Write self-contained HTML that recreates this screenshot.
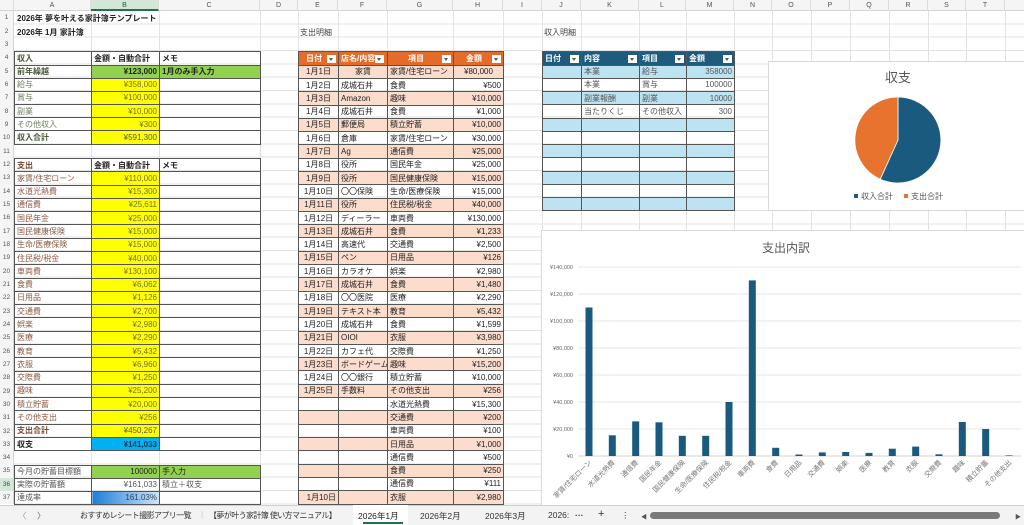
<!DOCTYPE html>
<html><head><meta charset="utf-8">
<style>
*{box-sizing:border-box;margin:0;padding:0}
body{width:1024px;height:525px;overflow:hidden;background:#fff;position:relative;font-family:"Liberation Sans","Noto Sans CJK JP",sans-serif;font-size:8px;color:#222}
.abs{position:absolute}
#grid{position:absolute;left:14px;top:11.33px;width:1010px;height:494px;background:repeating-linear-gradient(to bottom,transparent 0,transparent 12.333px,#e2e2e2 12.333px,#e2e2e2 13.333px)}
.vl{position:absolute;top:0;width:1px;height:505px;background:#e2e2e2}
#colh{position:absolute;left:0;top:0;width:1024px;height:11px;background:#f5f5f5;border-bottom:1px solid #d4d4d4}
#colh div{position:absolute;top:0;height:11px;line-height:11px;text-align:center;font-size:7px;color:#555;border-right:1px solid #dcdcdc}
#rowh{position:absolute;left:0;top:11.33px;width:14px;background:#f5f5f5;border-right:1px solid #d4d4d4}
#rowh div{height:13.333px;line-height:13px;text-align:center;font-size:6.5px;color:#555}
table{position:absolute;border-collapse:collapse;table-layout:fixed}
td{border:1px solid #555;padding:0 2px;white-space:nowrap;overflow:hidden;font-size:8px;line-height:11px;height:12px}
.r{text-align:right}.c{text-align:center}.b{font-weight:bold}
.y{background:#ffff00;color:#6f6f3a}
.g{background:#92d050}
.inc{color:#6f8060}.exp{color:#8a5a45}
.oh td{background:#e36c2a;color:#fff;font-weight:bold;text-align:center}
.ep tr:nth-child(even) td{background:#fbdccd}
.ip tr:nth-child(even) td{background:#bde2f1}
.ih td{background:#1f5b7d!important;color:#fff;font-weight:bold}
.dd{display:inline-block;width:9px;height:8px;background:#fff;float:right;margin-top:2px;position:relative}
.dd:after{content:"";position:absolute;left:2px;top:3px;border-left:2.5px solid transparent;border-right:2.5px solid transparent;border-top:3px solid #555}
#tabs{position:absolute;left:0;top:505px;width:1024px;height:20px;background:#f3f3f3;border-top:1px solid #d0d0d0;font-size:8.5px;color:#333}
#tabs span{position:absolute;top:4px;white-space:nowrap}
.t{font-size:8px;letter-spacing:-0.6px}
</style></head><body>
<div id="grid"></div>
<div class="vl" style="left:91px"></div><div class="vl" style="left:159px"></div><div class="vl" style="left:260px"></div><div class="vl" style="left:298px"></div><div class="vl" style="left:338px"></div><div class="vl" style="left:387px"></div><div class="vl" style="left:453px"></div><div class="vl" style="left:503px"></div><div class="vl" style="left:542px"></div><div class="vl" style="left:581px"></div><div class="vl" style="left:639px"></div><div class="vl" style="left:686px"></div><div class="vl" style="left:734px"></div><div class="vl" style="left:772px"></div><div class="vl" style="left:811px"></div><div class="vl" style="left:850px"></div><div class="vl" style="left:889px"></div><div class="vl" style="left:928px"></div><div class="vl" style="left:966px"></div><div class="vl" style="left:1005px"></div>

<div id="colh">
<div style="left:0;width:14px"></div>
<div style="left:14px;width:77px">A</div><div style="left:91px;width:68px;background:#d3e6d8;border-bottom:2px solid #217346;color:#1d5c37">B</div><div style="left:159px;width:101px">C</div><div style="left:260px;width:38px">D</div><div style="left:298px;width:40px">E</div><div style="left:338px;width:49px">F</div><div style="left:387px;width:66px">G</div><div style="left:453px;width:50px">H</div><div style="left:503px;width:39px">I</div><div style="left:542px;width:39px">J</div><div style="left:581px;width:58px">K</div><div style="left:639px;width:47px">L</div><div style="left:686px;width:48px">M</div><div style="left:734px;width:38px">N</div><div style="left:772px;width:39px">O</div><div style="left:811px;width:39px">P</div><div style="left:850px;width:39px">Q</div><div style="left:889px;width:39px">R</div><div style="left:928px;width:38px">S</div><div style="left:966px;width:39px">T</div>
</div>
<div id="rowh">
<div>1</div><div>2</div><div>3</div><div>4</div><div>5</div><div>6</div><div>7</div><div>8</div><div>9</div><div>10</div><div>11</div><div>12</div><div>13</div><div>14</div><div>15</div><div>16</div><div>17</div><div>18</div><div>19</div><div>20</div><div>21</div><div>22</div><div>23</div><div>24</div><div>25</div><div>26</div><div>27</div><div>28</div><div>29</div><div>30</div><div>31</div><div>32</div><div>33</div><div>34</div><div>35</div><div style="background:#d3e6d8;color:#1d5c37">36</div><div>37</div>
</div>

<div class="abs b" style="left:17px;top:12px;font-size:8px;line-height:13px">2026年 夢を叶える家計簿テンプレート</div>
<div class="abs b" style="left:17px;top:25.5px;font-size:8px;line-height:13px">2026年 1月 家計簿</div>
<div class="abs" style="left:300px;top:25.5px;line-height:13px;color:#444">支出明細</div>
<div class="abs" style="left:544px;top:25.5px;line-height:13px;color:#444">収入明細</div>

<table style="left:14px;top:51.33px;width:246px;height:93.33px">
<col style="width:77px"><col style="width:68px"><col style="width:101px">
<tr><td class="b inc" style="color:#4a5a3a">収入</td><td class="b">金額・自動合計</td><td class="b">メモ</td></tr>
<tr><td class="b" style="color:#4a5a3a">前年繰越</td><td class="g r b">¥123,000</td><td class="g b">1月のみ手入力</td></tr>
<tr><td class="inc">給与</td><td class="y r">¥358,000</td><td></td></tr>
<tr><td class="inc">賞与</td><td class="y r">¥100,000</td><td></td></tr>
<tr><td class="inc">副業</td><td class="y r">¥10,000</td><td></td></tr>
<tr><td class="inc">その他収入</td><td class="y r">¥300</td><td></td></tr>
<tr><td class="b" style="color:#4a5a3a">収入合計</td><td class="y r" style="color:#555">¥591,300</td><td></td></tr>
</table>

<table style="left:14px;top:158px;width:246px;height:293.33px">
<col style="width:77px"><col style="width:68px"><col style="width:101px">
<tr><td class="b" style="color:#7a4a35">支出</td><td class="b">金額・自動合計</td><td class="b">メモ</td></tr>
<tr><td class="exp">家賃/住宅ローン</td><td class="y r">¥110,000</td><td></td></tr>
<tr><td class="exp">水道光熱費</td><td class="y r">¥15,300</td><td></td></tr>
<tr><td class="exp">通信費</td><td class="y r">¥25,611</td><td></td></tr>
<tr><td class="exp">国民年金</td><td class="y r">¥25,000</td><td></td></tr>
<tr><td class="exp">国民健康保険</td><td class="y r">¥15,000</td><td></td></tr>
<tr><td class="exp">生命/医療保険</td><td class="y r">¥15,000</td><td></td></tr>
<tr><td class="exp">住民税/税金</td><td class="y r">¥40,000</td><td></td></tr>
<tr><td class="exp">車両費</td><td class="y r">¥130,100</td><td></td></tr>
<tr><td class="exp">食費</td><td class="y r">¥6,062</td><td></td></tr>
<tr><td class="exp">日用品</td><td class="y r">¥1,126</td><td></td></tr>
<tr><td class="exp">交通費</td><td class="y r">¥2,700</td><td></td></tr>
<tr><td class="exp">娯楽</td><td class="y r">¥2,980</td><td></td></tr>
<tr><td class="exp">医療</td><td class="y r">¥2,290</td><td></td></tr>
<tr><td class="exp">教育</td><td class="y r">¥5,432</td><td></td></tr>
<tr><td class="exp">衣服</td><td class="y r">¥6,960</td><td></td></tr>
<tr><td class="exp">交際費</td><td class="y r">¥1,250</td><td></td></tr>
<tr><td class="exp">趣味</td><td class="y r">¥25,200</td><td></td></tr>
<tr><td class="exp">積立貯蓄</td><td class="y r">¥20,000</td><td></td></tr>
<tr><td class="exp">その他支出</td><td class="y r">¥256</td><td></td></tr>
<tr><td class="b" style="color:#7a4a35">支出合計</td><td class="y r" style="color:#555">¥450,267</td><td></td></tr>
<tr><td class="b">収支</td><td class="r b" style="background:#00b0f0;color:#1a3a5a">¥141,033</td><td></td></tr>
</table>

<table style="left:14px;top:464.67px;width:246px;height:40px">
<col style="width:77px"><col style="width:68px"><col style="width:101px">
<tr><td style="color:#555">今月の貯蓄目標額</td><td class="g r">100000</td><td class="g">手入力</td></tr>
<tr><td style="color:#555">実際の貯蓄額</td><td class="r" style="border:1.5px solid #217346;color:#555">¥161,033</td><td style="color:#555">積立＋収支</td></tr>
<tr><td style="color:#555">達成率</td><td class="r" style="background:linear-gradient(to right,#1e7fd8,#cfe6fb);color:#345">161.03%</td><td></td></tr>
</table>

<table class="ep" style="left:298px;top:51.33px;width:205px;height:453.33px">
<col style="width:40px"><col style="width:49px"><col style="width:66px"><col style="width:50px">
<tr class="oh"><td>日付<span class="dd"></span></td><td style="text-align:left">店名/内容<span class="dd" style="position:absolute"></span></td><td>項目<span class="dd"></span></td><td>金額<span class="dd"></span></td></tr>
<tr><td class="c">1月1日</td><td class="c">家賃</td><td>家賃/住宅ローン</td><td class="c">¥80,000</td></tr>
<tr><td class="c">1月2日</td><td>成城石井</td><td>食費</td><td class="r">¥500</td></tr>
<tr><td class="c">1月3日</td><td>Amazon</td><td>趣味</td><td class="r">¥10,000</td></tr>
<tr><td class="c">1月4日</td><td>成城石井</td><td>食費</td><td class="r">¥1,000</td></tr>
<tr><td class="c">1月5日</td><td>郵便局</td><td>積立貯蓄</td><td class="r">¥10,000</td></tr>
<tr><td class="c">1月6日</td><td>倉庫</td><td>家賃/住宅ローン</td><td class="r">¥30,000</td></tr>
<tr><td class="c">1月7日</td><td>Ag</td><td>通信費</td><td class="r">¥25,000</td></tr>
<tr><td class="c">1月8日</td><td>役所</td><td>国民年金</td><td class="r">¥25,000</td></tr>
<tr><td class="c">1月9日</td><td>役所</td><td>国民健康保険</td><td class="r">¥15,000</td></tr>
<tr><td class="c">1月10日</td><td>〇〇保険</td><td>生命/医療保険</td><td class="r">¥15,000</td></tr>
<tr><td class="c">1月11日</td><td>役所</td><td>住民税/税金</td><td class="r">¥40,000</td></tr>
<tr><td class="c">1月12日</td><td>ディーラー</td><td>車両費</td><td class="r">¥130,000</td></tr>
<tr><td class="c">1月13日</td><td>成城石井</td><td>食費</td><td class="r">¥1,233</td></tr>
<tr><td class="c">1月14日</td><td>高速代</td><td>交通費</td><td class="r">¥2,500</td></tr>
<tr><td class="c">1月15日</td><td>ペン</td><td>日用品</td><td class="r">¥126</td></tr>
<tr><td class="c">1月16日</td><td>カラオケ</td><td>娯楽</td><td class="r">¥2,980</td></tr>
<tr><td class="c">1月17日</td><td>成城石井</td><td>食費</td><td class="r">¥1,480</td></tr>
<tr><td class="c">1月18日</td><td>〇〇医院</td><td>医療</td><td class="r">¥2,290</td></tr>
<tr><td class="c">1月19日</td><td>テキスト本</td><td>教育</td><td class="r">¥5,432</td></tr>
<tr><td class="c">1月20日</td><td>成城石井</td><td>食費</td><td class="r">¥1,599</td></tr>
<tr><td class="c">1月21日</td><td>OIOI</td><td>衣服</td><td class="r">¥3,980</td></tr>
<tr><td class="c">1月22日</td><td>カフェ代</td><td>交際費</td><td class="r">¥1,250</td></tr>
<tr><td class="c">1月23日</td><td>ボードゲーム</td><td>趣味</td><td class="r">¥15,200</td></tr>
<tr><td class="c">1月24日</td><td>〇〇銀行</td><td>積立貯蓄</td><td class="r">¥10,000</td></tr>
<tr><td class="c">1月25日</td><td>手数料</td><td>その他支出</td><td class="r">¥256</td></tr>
<tr><td></td><td></td><td>水道光熱費</td><td class="r">¥15,300</td></tr>
<tr><td></td><td></td><td>交通費</td><td class="r">¥200</td></tr>
<tr><td></td><td></td><td>車両費</td><td class="r">¥100</td></tr>
<tr><td></td><td></td><td>日用品</td><td class="r">¥1,000</td></tr>
<tr><td></td><td></td><td>通信費</td><td class="r">¥500</td></tr>
<tr><td></td><td></td><td>食費</td><td class="r">¥250</td></tr>
<tr><td></td><td></td><td>通信費</td><td class="r">¥111</td></tr>
<tr><td class="r">1月10日</td><td></td><td>衣服</td><td class="r">¥2,980</td></tr>
</table>

<table class="ip" style="left:542px;top:51.33px;width:192px;height:160px">
<col style="width:39px"><col style="width:58px"><col style="width:47px"><col style="width:48px">
<tr class="ih"><td>日付<span class="dd"></span></td><td>内容<span class="dd"></span></td><td>項目<span class="dd"></span></td><td>金額<span class="dd"></span></td></tr>
<tr><td></td><td style="color:#555">本業</td><td style="color:#555">給与</td><td class="r" style="color:#555">358000</td></tr>
<tr><td></td><td style="color:#555">本業</td><td style="color:#555">賞与</td><td class="r" style="color:#555">100000</td></tr>
<tr><td></td><td style="color:#555">副業報酬</td><td style="color:#555">副業</td><td class="r" style="color:#555">10000</td></tr>
<tr><td></td><td style="color:#555">当たりくじ</td><td style="color:#555">その他収入</td><td class="r" style="color:#555">300</td></tr>
<tr><td></td><td></td><td></td><td></td></tr>
<tr><td></td><td></td><td></td><td></td></tr>
<tr><td></td><td></td><td></td><td></td></tr>
<tr><td></td><td></td><td></td><td></td></tr>
<tr><td></td><td></td><td></td><td></td></tr>
<tr><td></td><td></td><td></td><td></td></tr>
<tr><td></td><td></td><td></td><td></td></tr>
</table>

<svg class="abs" style="left:0;top:0" width="1024" height="525" font-family="Liberation Sans, Noto Sans CJK JP, sans-serif">
<rect x="768.5" y="61.5" width="260" height="149" fill="#fff" stroke="#d9d9d9"/>
<text x="898" y="82" font-size="13" fill="#595959" text-anchor="middle">収支</text>
<path d="M898,140 L898,97 A43,43 0 1 1 880.2,179.2 Z" fill="#1a5a7e" stroke="#fff" stroke-width="0.8"/>
<path d="M898,140 L880.2,179.2 A43,43 0 0 1 898,97 Z" fill="#e8732f" stroke="#fff" stroke-width="0.8"/>
<rect x="854" y="194" width="4" height="4" fill="#1a5a7e"/><text x="861" y="199" font-size="8" fill="#595959">収入合計</text>
<rect x="904" y="194" width="4" height="4" fill="#e8732f"/><text x="911" y="199" font-size="8" fill="#595959">支出合計</text>

<g transform="translate(541,230)">
<rect x="0.5" y="0.5" width="490" height="275" fill="#fff" stroke="#d9d9d9"/>
<text x="245" y="22" font-size="12" fill="#595959" text-anchor="middle">支出内訳</text>
<g stroke="#e6e6e6" stroke-width="1">
<line x1="37" x2="480" y1="37" y2="37"/><line x1="37" x2="480" y1="64" y2="64"/><line x1="37" x2="480" y1="91" y2="91"/><line x1="37" x2="480" y1="118" y2="118"/><line x1="37" x2="480" y1="145" y2="145"/><line x1="37" x2="480" y1="172" y2="172"/><line x1="37" x2="480" y1="199" y2="199"/><line x1="37" x2="480" y1="226" y2="226" stroke="#d0d0d0"/>
</g>
<g font-size="5.5" fill="#666" text-anchor="end">
<text x="32" y="39">¥140,000</text><text x="32" y="66">¥120,000</text><text x="32" y="93">¥100,000</text><text x="32" y="120">¥80,000</text><text x="32" y="147">¥60,000</text><text x="32" y="174">¥40,000</text><text x="32" y="201">¥20,000</text><text x="32" y="228">¥0</text>
</g>
<g fill="#1a5a7e">
<rect x="44.5" y="77.5" width="7" height="148.5"/>
<rect x="67.8" y="205.3" width="7" height="20.7"/>
<rect x="91.2" y="191.4" width="7" height="34.6"/>
<rect x="114.5" y="192.3" width="7" height="33.7"/>
<rect x="137.8" y="205.8" width="7" height="20.2"/>
<rect x="161.2" y="205.8" width="7" height="20.2"/>
<rect x="184.5" y="172" width="7" height="54"/>
<rect x="207.8" y="50.4" width="7" height="175.6"/>
<rect x="231.2" y="217.8" width="7" height="8.2"/>
<rect x="254.5" y="224.5" width="7" height="1.5"/>
<rect x="277.8" y="222.4" width="7" height="3.6"/>
<rect x="301.2" y="222" width="7" height="4"/>
<rect x="324.5" y="222.9" width="7" height="3.1"/>
<rect x="347.8" y="218.7" width="7" height="7.3"/>
<rect x="371.2" y="216.6" width="7" height="9.4"/>
<rect x="394.5" y="224.3" width="7" height="1.7"/>
<rect x="417.8" y="192" width="7" height="34"/>
<rect x="441.2" y="199" width="7" height="27"/>
<rect x="464.5" y="225.4" width="7" height="0.6"/>
</g>
<g font-size="7" fill="#777" text-anchor="end">
<text transform="translate(51,233) rotate(-45)">家賃/住宅ローン</text>
<text transform="translate(74.3,233) rotate(-45)">水道光熱費</text>
<text transform="translate(97.7,233) rotate(-45)">通信費</text>
<text transform="translate(121,233) rotate(-45)">国民年金</text>
<text transform="translate(144.3,233) rotate(-45)">国民健康保険</text>
<text transform="translate(167.7,233) rotate(-45)">生命/医療保険</text>
<text transform="translate(191,233) rotate(-45)">住民税/税金</text>
<text transform="translate(214.3,233) rotate(-45)">車両費</text>
<text transform="translate(237.7,233) rotate(-45)">食費</text>
<text transform="translate(261,233) rotate(-45)">日用品</text>
<text transform="translate(284.3,233) rotate(-45)">交通費</text>
<text transform="translate(307.7,233) rotate(-45)">娯楽</text>
<text transform="translate(331,233) rotate(-45)">医療</text>
<text transform="translate(354.3,233) rotate(-45)">教育</text>
<text transform="translate(377.7,233) rotate(-45)">衣服</text>
<text transform="translate(401,233) rotate(-45)">交際費</text>
<text transform="translate(424.3,233) rotate(-45)">趣味</text>
<text transform="translate(447.7,233) rotate(-45)">積立貯蓄</text>
<text transform="translate(471,233) rotate(-45)">その他支出</text>
</g>
</g>
</svg>

<div id="tabs">
<span style="left:18px;color:#999">〈</span><span style="left:37px;color:#666">〉</span>
<span class="t" style="left:80px">おすすめレシート撮影アプリ一覧</span>
<span style="left:201px;top:3px;color:#ccc">|</span>
<span class="t" style="left:209px">【夢が叶う家計簿 使い方マニュアル】</span>
<div style="position:absolute;left:353px;top:-1px;width:55px;height:20px;background:#fff"></div>
<span style="left:358px;color:#222">2026年1月</span>
<div style="position:absolute;left:363px;top:16px;width:40px;height:2px;background:#217346"></div>
<span style="left:420px">2026年2月</span>
<span style="left:485px">2026年3月</span>
<span style="left:548px">2026:</span>
<span style="left:575px;font-weight:bold">···</span>
<span style="left:598px;font-size:11px;top:2px">+</span>
<span style="left:621px">⋮</span>
<span style="left:641px;font-size:6px;top:6px;color:#555">◀</span>
<div style="position:absolute;left:650px;top:6px;width:350px;height:7px;border-radius:4px;background:#7a7a7a"></div>
<span style="left:1015px;font-size:6px;top:6px;color:#555">▶</span>
</div>
</body></html>
